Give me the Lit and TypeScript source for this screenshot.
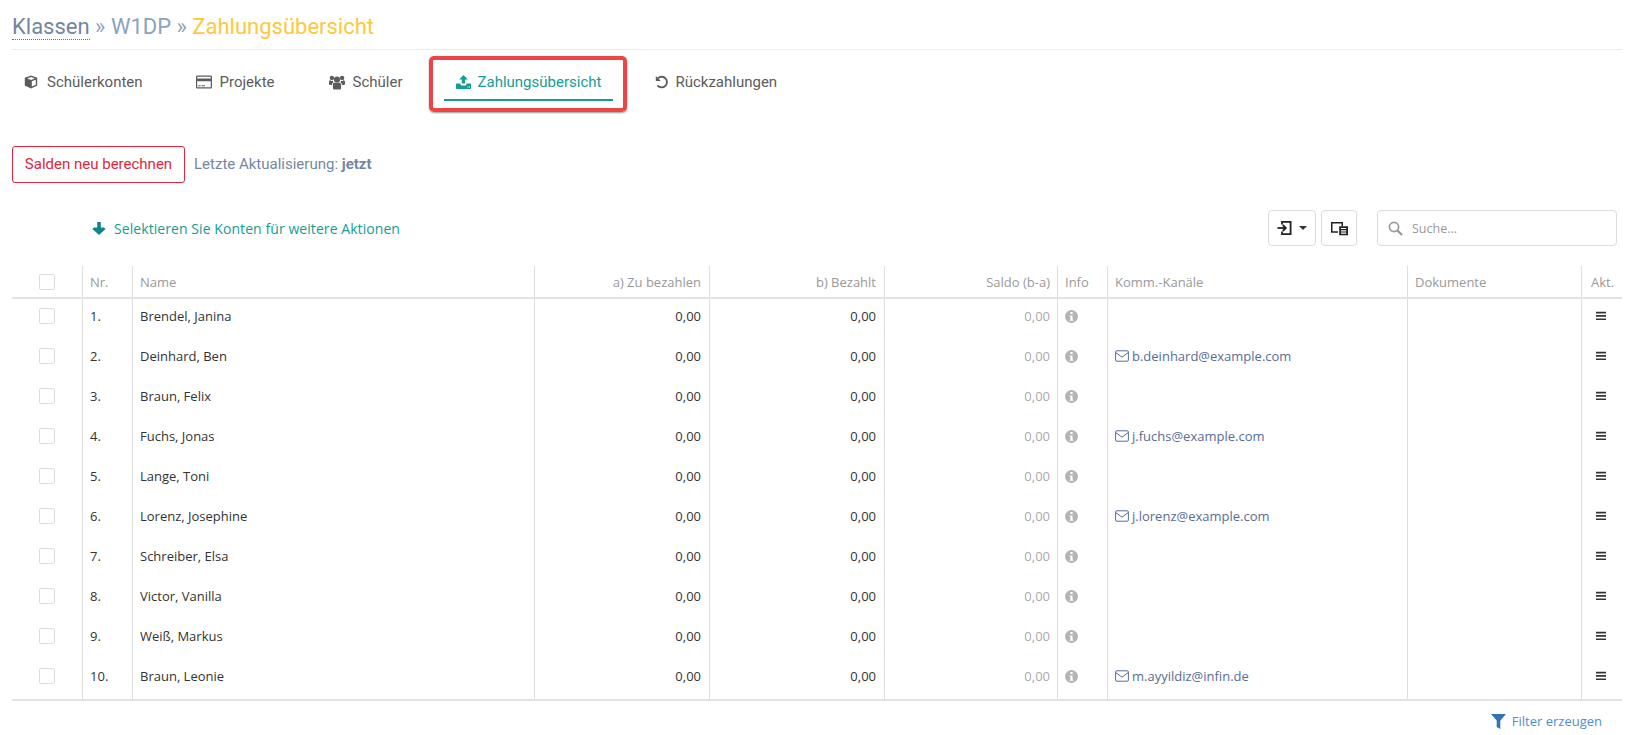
import { LitElement, html, css, svg } from "lit";
import { customElement } from "lit/decorators.js";

const rows: [string, string][] = [
  ["Brendel, Janina", ""],
  ["Deinhard, Ben", "b.deinhard@example.com"],
  ["Braun, Felix", ""],
  ["Fuchs, Jonas", "j.fuchs@example.com"],
  ["Lange, Toni", ""],
  ["Lorenz, Josephine", "j.lorenz@example.com"],
  ["Schreiber, Elsa", ""],
  ["Victor, Vanilla", ""],
  ["Weiß, Markus", ""],
  ["Braun, Leonie", "m.ayyildiz@infin.de"],
];

const ic = (w: number, h: number, vb: string, body: unknown, cls = "") =>
  html`<svg class="ic ${cls}" width=${w} height=${h} viewBox=${vb} fill="currentColor">${body}</svg>`;

const cube = ic(14, 14, "0 0 14 14", svg`<path d="M7 .5 13.2 2.8V10.6L7 13.6.8 10.6V2.8ZM7 2 3.2 3.4 7 4.9 10.8 3.4ZM7.8 6.2V11.6L11.8 9.7V4.7Z"/>`);
const card = ic(16, 14, "0 0 16 14", svg`<path fill-rule="evenodd" d="M1.3 0.5H14.7A1.3 1.3 0 0 1 16 1.8V12.2A1.3 1.3 0 0 1 14.7 13.5H1.3A1.3 1.3 0 0 1 0 12.2V1.8A1.3 1.3 0 0 1 1.3.5ZM1.2 1.7V3.6H14.8V1.7ZM1.2 6.3V12.3H14.8V6.3ZM2.3 10.2H4.6V11.2H2.3ZM5.5 10.2H9V11.2H5.5Z"/>`);
const users = ic(16, 15, "0 0 16 15", svg`<circle cx="8" cy="4.6" r="3.1"/><circle cx="2.9" cy="2.9" r="2.2"/><circle cx="13.1" cy="2.9" r="2.2"/><path d="M3.9 10C3.9 8.3 5 7.5 5.9 7.5 6.8 8.2 9.2 8.2 10.1 7.5 11 7.5 12.1 8.3 12.1 10V12.9C12.1 14 11.3 14.5 10.6 14.5H5.4C4.7 14.5 3.9 14 3.9 12.9ZM0 7C0 6 .6 5.3 1.3 5.3 2 5.9 3 6 4 5.8 4 6.5 4.3 7 4.6 7.2 3.7 7.7 3 8.6 3 10H1C.4 10 0 9.5 0 8.8ZM16 7C16 6 15.4 5.3 14.7 5.3 14 5.9 13 6 12 5.8 12 6.5 11.7 7 11.4 7.2 12.3 7.7 13 8.6 13 10H15C15.6 10 16 9.5 16 8.8Z"/>`);
const upload = ic(15, 14, "0 0 15 14", svg`<path fill-rule="evenodd" d="M7.5 0 11.8 4.4H9.2V8.6H5.8V4.4H3.2ZM0.6 8.4H4.6V9.6C4.6 10 5 10.4 5.4 10.4H9.6C10 10.4 10.4 10 10.4 9.6V8.4H14.4C14.8 8.4 15 8.7 15 9V13.2C15 13.6 14.8 13.9 14.4 13.9H.6C.2 13.9 0 13.6 0 13.2V9C0 8.7.2 8.4.6 8.4ZM11.4 11.6V12.6H12.4V11.6ZM13 11.6V12.6H14V11.6Z"/>`);
const undo = html`<svg class="ic" width="14" height="14" viewBox="0 0 14 14" fill="none"><path d="M3 3.2A5.3 5.3 0 1 1 2.4 10.2" stroke="currentColor" stroke-width="1.9"/><path d="M0.8 1V6H5.8Z" fill="currentColor"/></svg>`;
const arrowDown = ic(14, 14, "0 0 14 14", svg`<path d="M5.2 1H8.8V6.4H12L13.6 8 7 14 .4 8 2 6.4H5.2Z"/>`);
const info = ic(13, 13, "0 0 12 12", svg`<path fill-rule="evenodd" d="M6 0A6 6 0 1 1 6 12 6 6 0 0 1 6 0ZM5 1.8V3.6H7V1.8ZM4.3 5V6.1H5V8.9H4.3V10H7.7V8.9H7V5Z"/>`);
const mail = html`<svg class="ic" width="14" height="12" viewBox="0 0 14 12" fill="none" stroke="currentColor" stroke-width="1"><rect x=".6" y=".8" width="12.8" height="10.4" rx="1.2"/><path d="M.8 2.6 7 7.2 13.2 2.6"/></svg>`;
const bars = ic(10, 10, "0 0 10 10", svg`<path d="M0 .8H10V2.4H0ZM0 4.1H10V5.7H0ZM0 7.4H10V9H0Z"/>`);
const filter = ic(15, 15, "0 0 15 15", svg`<path d="M0 0H15L9.3 6.5V15L5.7 13V6.5Z"/>`);
const search = html`<svg class="ic" width="15" height="15" viewBox="0 0 15 15" fill="none" stroke="currentColor" stroke-width="1.7"><circle cx="6" cy="6" r="4.6"/><path d="M9.4 9.4 14 14" stroke-width="2.2"/></svg>`;
const importIc = html`<svg class="ic" width="15" height="14" viewBox="0 0 15 14" fill="none" stroke="currentColor" stroke-width="1.8"><path d="M5 3.6V.9H13.6V13.1H5V10.4"/><path d="M.5 7H8"/><path d="M5.8 4 8.8 7 5.8 10"/></svg>`;
const columnsIc = html`<svg class="ic" width="17" height="15" viewBox="0 0 17 14" fill="currentColor"><path fill-rule="evenodd" d="M0 .5H12V4.5H10.5V2H1.5V9.8H7V11.3H0Z"/><path fill-rule="evenodd" d="M8.2 4.8H17V13.8H8.2ZM10 6.4V7.5H15.2V6.4ZM10 8.8V9.9H15.2V8.8ZM10 11.1V12.2H15.2V11.1Z"/></svg>`;

@customElement("app-root")
export class AppRoot extends LitElement {
  static styles = css`
    :host { display: block; width: 1631px; height: 735px; background: #fff; color: #333; font-family: "Open Sans", sans-serif; overflow: hidden; }
    .ic { display: block; flex: none; }
    .page { padding: 0 9px 0 12px; }
    .title { height: 50px; box-sizing: border-box; border-bottom: 1px solid #e9ecef; padding-top: 13px; font: 400 22px/28px Roboto, sans-serif; color: #8da2bb; white-space: nowrap; }
    .title .link { color: #72869e; border-bottom: 1px dotted #5b7396; }
    .title .cur { color: #fdc83c; }
    .tabs { display: flex; gap: 30px; padding-top: 15px; height: 69px; box-sizing: border-box; font: 400 15px/20px Roboto, sans-serif; color: #5c5c5c; }
    .tab { position: relative; display: flex; align-items: center; gap: 8px; height: 36px; padding: 0 12px; box-sizing: border-box; border-bottom: 2px solid transparent; }
    .tab.first { gap: 9px; padding-right: 11px; }
    .tab.narrow { padding-right: 11px; }
    .tab.g6 { gap: 6px; }
    .tab.active { gap: 7px; color: #149c95; border-bottom-color: #149c95; }
    .mark { position: absolute; left: -15px; right: -14px; top: -9px; bottom: -13px; border: 4px solid #ef4444; border-radius: 5px; box-shadow: 0 1px 2px rgba(0,0,0,.4); pointer-events: none; }
    .calc { display: flex; align-items: center; gap: 9px; margin-top: 27px; font: 400 15px/20px Roboto, sans-serif; color: #74889f; }
    .calc button { height: 37px; width: 173px; padding: 0 0 2px; background: #fff; border: 1px solid #e0263c; border-radius: 3px; color: #e0263c; font: inherit; }
    .calc span { position: relative; top: -1px; }
    .calc b { font-weight: 700; }
    .toolbar { display: flex; align-items: center; margin-top: 27px; height: 36px; padding-left: 80px; }
    .hint { display: flex; align-items: center; gap: 8px; font-size: 14px; letter-spacing: .07px; color: #149c95; }
    .hint-ic { color: #10858a; }
    .spacer { flex: 1; }
    .tb { display: flex; align-items: center; justify-content: center; height: 36px; box-sizing: border-box; background: #fff; border: 1px solid #dcdcdc; border-radius: 4px; color: #222; }
    .tb.a { width: 48px; gap: 7px; margin-right: 5px; }
    .tb.b { width: 36px; margin-right: 20px; }
    .caret { width: 0; height: 0; border: 4px solid transparent; border-top: 4px solid #333; border-bottom: 0; }
    .search { display: flex; align-items: center; gap: 9px; width: 240px; height: 36px; box-sizing: border-box; padding-left: 10px; border: 1px solid #dcdcdc; border-radius: 4px; font-size: 12.5px; color: #999; margin-right: 5px; }
    .search .ic { color: #999; }
    table { table-layout: fixed; border-collapse: separate; border-spacing: 0; width: 1610px; margin-top: 20px; font-size: 13px; color: #333; }
    col.c0 { width: 70px; } col.c1 { width: 50px; } col.c2 { width: 402px; } col.c3, col.c4 { width: 175px; } col.c5 { width: 173px; }
    col.c6 { width: 50px; } col.c7 { width: 300px; } col.c8 { width: 174px; } col.c9 { width: 41px; }
    th { height: 33px; box-sizing: border-box; padding: 0 7px; font-weight: 400; font-size: 13px; color: #999; text-align: left; border-left: 1px solid #dedede; border-bottom: 2px solid #e3e3e3; white-space: nowrap; }
    th.akt { padding-left: 9px; padding-right: 0; }
    td { height: 40px; box-sizing: border-box; padding: 7px 7px 0; line-height: 20px; vertical-align: top; border-left: 1px solid #dedede; white-space: nowrap; }
    th:first-child, td:first-child { border-left: 0; }
    th.r, td.r { text-align: right; padding-right: 8px; }
    th.saldo, td.muted { padding-right: 7px; }
    td.muted { color: #aaa; }
    .check { display: block; width: 16px; height: 16px; box-sizing: border-box; margin-left: 27px; border: 1px solid #dcdcdc; border-radius: 2px; background: #fff; }
    td.chk { padding: 9px 0 0; }
    th.chk { padding: 0; }
    td.inf { color: #b4b4b4; padding-top: 11px; padding-left: 7px; }
    .mailc { display: flex; align-items: center; gap: 3px; color: #596c95; }
    .mailc .ic { color: #596c95; }
    td.act { color: #333; padding: 12px 0 0 14px; }
    .foot { display: flex; justify-content: flex-end; align-items: center; gap: 6px; border-top: 2px solid #e3e3e3; width: 1610px; height: 42px; box-sizing: border-box; padding-right: 20px; font-size: 13px; color: #4b8fd0; }
    .foot .ic { color: #2e74b8; }
  `;

  render() {
    return html`<div class="page">
      <div class="title"><span class="link">Klassen</span> » W1DP » <span class="cur">Zahlungsübersicht</span></div>
      <nav class="tabs">
        <div class="tab first">${cube}Schülerkonten</div>
        <div class="tab">${card}Projekte</div>
        <div class="tab narrow">${users}Schüler</div>
        <div class="tab active">${upload}Zahlungsübersicht<span class="mark"></span></div>
        <div class="tab g6">${undo}Rückzahlungen</div>
      </nav>
      <div class="calc"><button>Salden neu berechnen</button><span>Letzte Aktualisierung: <b>jetzt</b></span></div>
      <div class="toolbar">
        <div class="hint"><span class="hint-ic">${arrowDown}</span>Selektieren Sie Konten für weitere Aktionen</div>
        <div class="spacer"></div>
        <div class="tb a">${importIc}<span class="caret"></span></div>
        <div class="tb b">${columnsIc}</div>
        <div class="search">${search}Suche...</div>
      </div>
      <table>
        <colgroup><col class="c0"/><col class="c1"/><col class="c2"/><col class="c3"/><col class="c4"/><col class="c5"/><col class="c6"/><col class="c7"/><col class="c8"/><col class="c9"/></colgroup>
        <thead><tr>
          <th class="chk"><span class="check"></span></th><th>Nr.</th><th>Name</th>
          <th class="r">a) Zu bezahlen</th><th class="r">b) Bezahlt</th><th class="r saldo">Saldo (b-a)</th>
          <th>Info</th><th>Komm.-Kanäle</th><th>Dokumente</th><th class="akt">Akt.</th>
        </tr></thead>
        <tbody>${rows.map(([n, m], i) => html`<tr>
          <td class="chk"><span class="check"></span></td><td>${i + 1}.</td><td>${n}</td>
          <td class="r">0,00</td><td class="r">0,00</td><td class="r muted">0,00</td>
          <td class="inf">${info}</td>
          <td>${m ? html`<div class="mailc">${mail}${m}</div>` : ""}</td>
          <td></td><td class="act">${bars}</td>
        </tr>`)}</tbody>
      </table>
      <div class="foot">${filter}Filter erzeugen</div>
    </div>`;
  }
}
